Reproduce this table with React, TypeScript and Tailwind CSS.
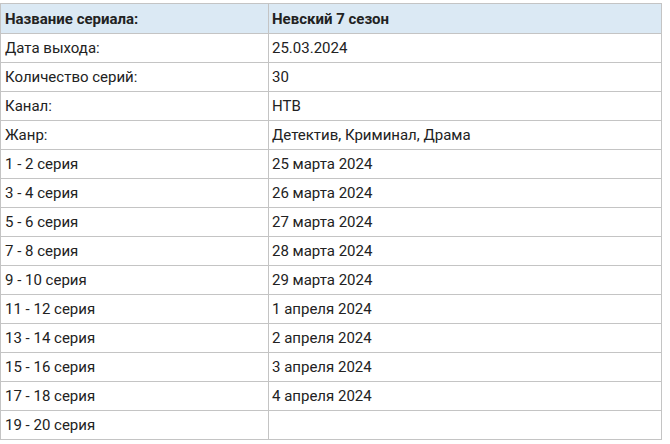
const rows: [string, string][] = [
  ['Дата выхода:', '25.03.2024'],
  ['Количество серий:', '30'],
  ['Канал:', 'НТВ'],
  ['Жанр:', 'Детектив, Криминал, Драма'],
  ['1 - 2 серия', '25 марта 2024'],
  ['3 - 4 серия', '26 марта 2024'],
  ['5 - 6 серия', '27 марта 2024'],
  ['7 - 8 серия', '28 марта 2024'],
  ['9 - 10 серия', '29 марта 2024'],
  ['11 - 12 серия', '1 апреля 2024'],
  ['13 - 14 серия', '2 апреля 2024'],
  ['15 - 16 серия', '3 апреля 2024'],
  ['17 - 18 серия', '4 апреля 2024'],
  ['19 - 20 серия', ''],
];

export default function App() {
  return (
    <div className="w-[670px] h-[444px] bg-white pt-[3px] font-['Roboto','Liberation_Sans',sans-serif] text-[15px] text-[#222]">
      <table className="w-[662px] border-collapse table-fixed">
        <colgroup>
          <col className="w-[268px]" />
          <col />
        </colgroup>
        <thead>
          <tr className="bg-[#dbe9f4] h-[30px]">
            <th className="border border-[#c4c4c4] px-[4px] text-left font-bold leading-[18px]">Название сериала:</th>
            <th className="border border-[#c4c4c4] px-[3px] text-left font-bold leading-[18px]">Невский 7 сезон</th>
          </tr>
        </thead>
        <tbody>
          {rows.map(([a, b]) => (
            <tr key={a} className="h-[29px]">
              <td className="border border-[#c4c4c4] px-[4px] leading-[18px]">{a}</td>
              <td className="border border-[#c4c4c4] px-[3px] leading-[18px]">{b}</td>
            </tr>
          ))}
        </tbody>
      </table>
    </div>
  );
}
